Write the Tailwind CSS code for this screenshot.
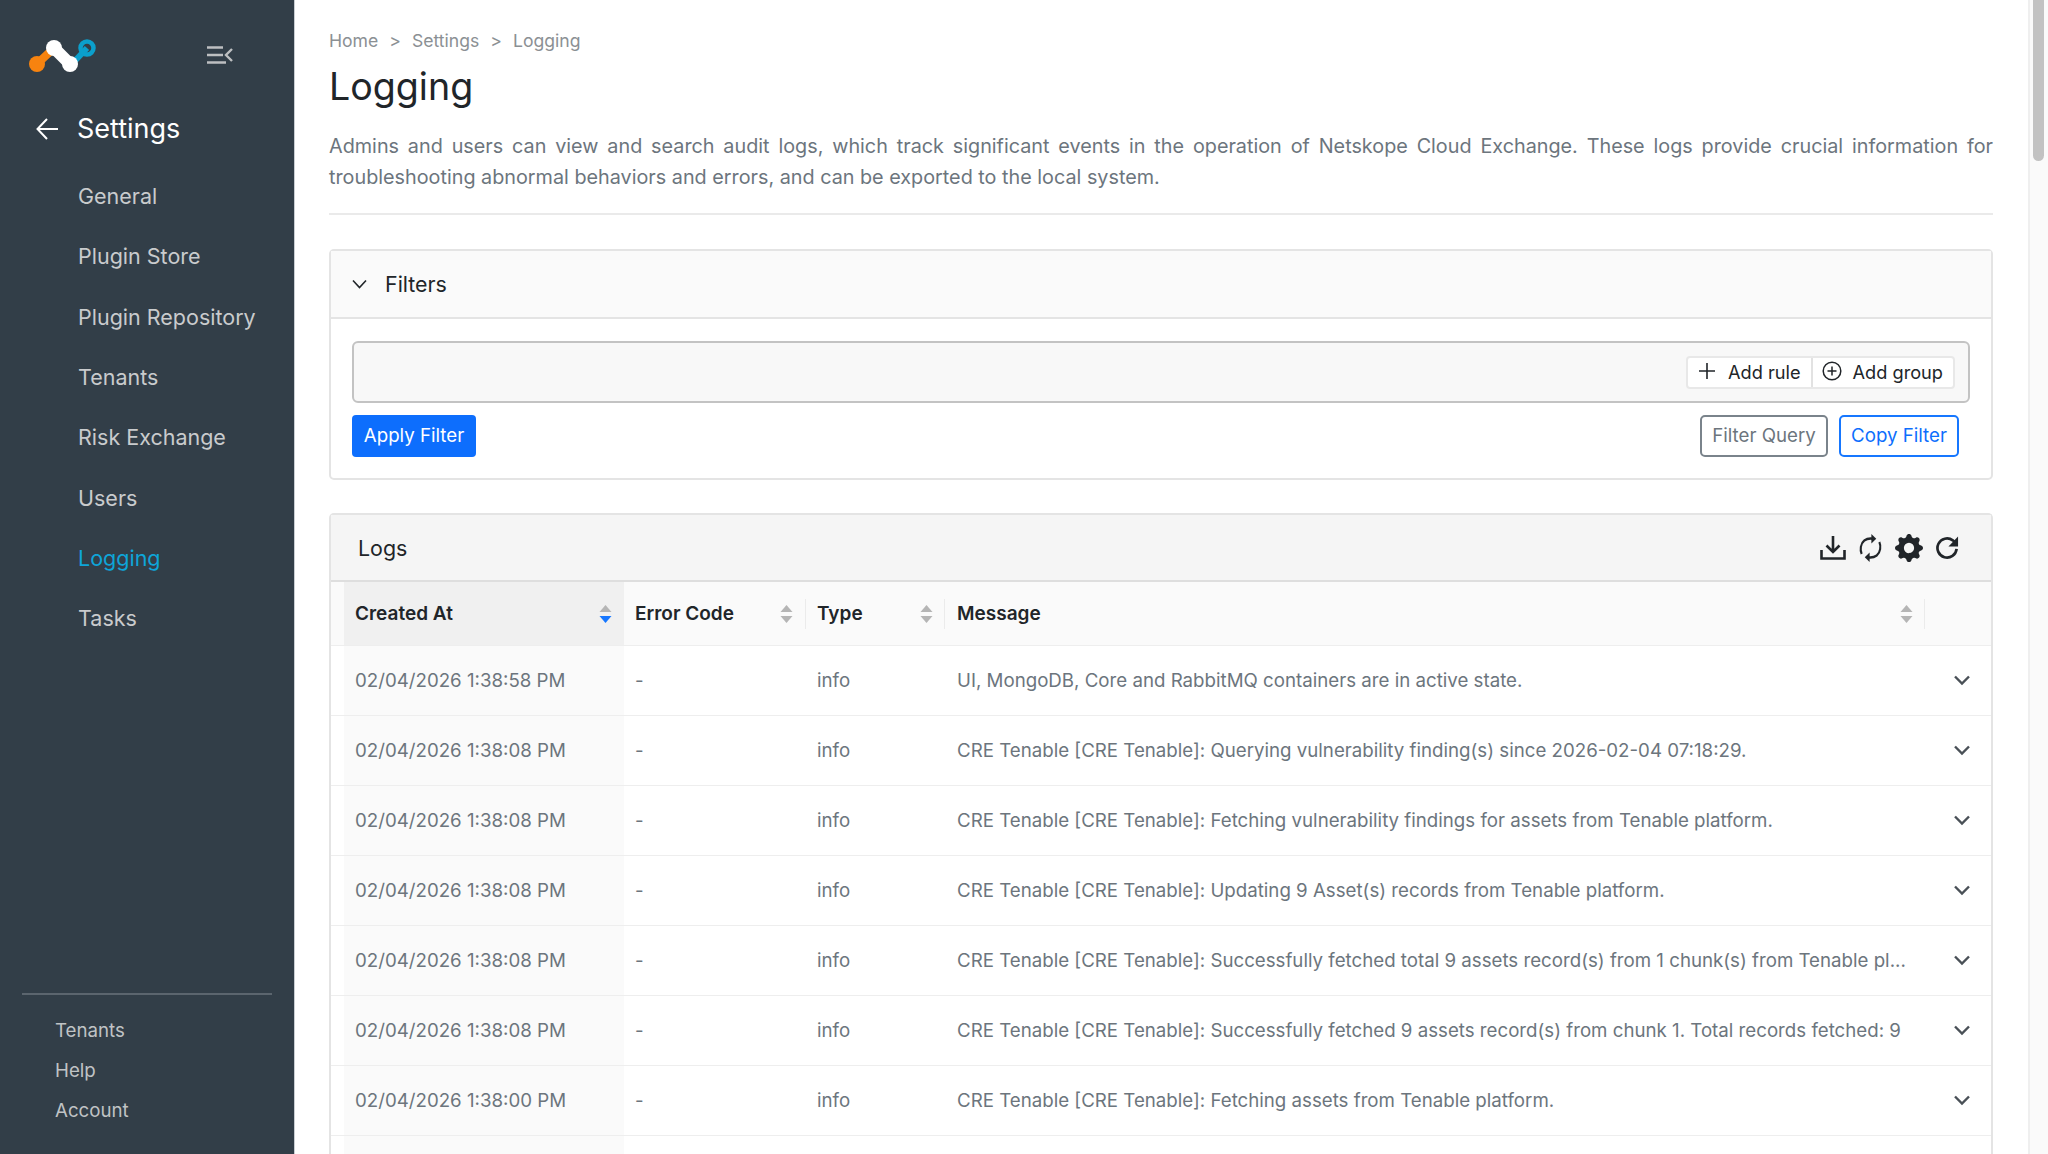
<!doctype html>
<html lang="en">
<head>
<meta charset="utf-8">
<title>Logging</title>
<script src="https://cdn.jsdelivr.net/npm/@tailwindcss/browser@4"></script>
</head>
<body class="font-['Inter',sans-serif] text-[#212529]">
<div class="flex h-[1154px] w-[2048px] overflow-hidden bg-white">
  <!-- Sidebar -->
  <aside class="flex w-[295px] shrink-0 flex-col border-r border-[#c9ced3] bg-[#323e48]">
    <div class="flex h-[111px] items-center pl-[27px] pt-[1px]">
      <svg width="72" height="44" viewBox="0 0 72 44" class="mb-[6px]">
        <path d="M10 33 L27 17" stroke="#f7830f" stroke-width="8" stroke-linecap="round"/>
        <circle cx="10" cy="33" r="8" fill="#f7830f"/>
        <path d="M45 33 L60 17" stroke="#0b9fcc" stroke-width="6"/>
        <circle cx="60" cy="17" r="6.5" fill="none" stroke="#0b9fcc" stroke-width="4.5"/>
        <path d="M27 17 L43 33" stroke="#fff" stroke-width="12" stroke-linecap="round"/>
        <circle cx="27" cy="17" r="8" fill="#fff"/>
        <circle cx="43" cy="33" r="8" fill="#fff"/>
      </svg>
      <svg width="26" height="18" viewBox="0 0 26 18" class="ml-[108px] mb-[3px]" fill="none" stroke="#bdbfc1" stroke-width="2.4">
        <path d="M0 1.500H16M0 9H16M0 16.500H19M25 3L19 9L25 15"/>
      </svg>
    </div>
    <div class="flex h-[36px] items-center pl-[36px]">
      <svg width="22" height="22" viewBox="0 0 22 22" fill="none" stroke="#fff" stroke-width="2" class="mb-[1px]"><path d="M22 11H1.500M11 1L1.500 11L11 21"/></svg>
      <span class="ml-[19px] text-[27px] leading-[36px] text-white">Settings</span>
    </div>
    <nav class="mt-[19px] flex flex-col pl-[78px] text-[21.5px] text-[#c9cbcd]">
      <a class="flex h-[60.3px] items-center">General</a>
      <a class="flex h-[60.3px] items-center">Plugin Store</a>
      <a class="flex h-[60.3px] items-center">Plugin Repository</a>
      <a class="flex h-[60.3px] items-center">Tenants</a>
      <a class="flex h-[60.3px] items-center">Risk Exchange</a>
      <a class="flex h-[60.3px] items-center">Users</a>
      <a class="flex h-[60.3px] items-center text-[#0ea5d8]">Logging</a>
      <a class="flex h-[60.3px] items-center">Tasks</a>
    </nav>
    <div class="mx-[22px] mt-auto border-t-2 border-[#5b656e]"></div>
    <div class="flex flex-col pb-[23px] pl-[55px] pt-[16px] text-[18.7px] text-[#c0c3c5]">
      <a class="flex h-[40px] items-center">Tenants</a>
      <a class="flex h-[40px] items-center">Help</a>
      <a class="flex h-[40px] items-center">Account</a>
    </div>
  </aside>

  <!-- Main -->
  <main class="flex min-w-0 flex-1 flex-col overflow-hidden pl-[34px] pr-[35px]">
    <div class="mt-[29px] flex h-[24px] items-center text-[17.6px] text-[#8b9094]">
      <span>Home</span><span class="mx-[11px]">&gt;</span><span>Settings</span><span class="mx-[11px]">&gt;</span><span>Logging</span>
    </div>
    <h1 class="mt-[9px] h-[50px] text-[37.6px] leading-[50px] font-normal text-[#212529]">Logging</h1>
    <p class="mt-[19px] text-justify text-[19.8px] leading-[31px] text-[#6c757d]">Admins and users can view and search audit logs, which track significant events in the operation of Netskope Cloud Exchange. These logs provide crucial information for troubleshooting abnormal behaviors and errors, and can be exported to the local system.</p>
    <div class="mt-[20px] border-t-2 border-[#eaeaea]"></div>

    <!-- Filters -->
    <section class="mt-[34px] h-[231px] shrink-0 rounded-[5px] border-2 border-[#e4e4e4]">
      <div class="flex h-[68px] items-center border-b-2 border-[#e4e4e4] bg-[#fafafa] pl-[21px]">
        <svg width="15" height="10" viewBox="0 0 15 10" fill="none" stroke="#212529" stroke-width="1.600"><path d="M1 1.500L7.500 8.500L14 1.500"/></svg>
        <span class="ml-[18px] pt-[1px] text-[21.4px] text-[#212529]">Filters</span>
      </div>
      <div class="pl-[21px] pr-[21px] pt-[22px]">
        <div class="flex h-[62px] items-center justify-end rounded-[6px] border-2 border-[#c3c3c3] bg-[#f8f8f8] pr-[13px]">
          <div class="flex h-[33px] items-center rounded-[4px] border-2 border-[#e8e8e8] bg-white text-[18.2px] text-[#212529]">
            <div class="flex h-full items-center gap-[13px] border-r-2 border-[#e2e2e2] pl-[11px] pr-[10px]">
              <svg width="16" height="16" viewBox="0 0 16 16" fill="none" stroke="#212529" stroke-width="1.600" class="mb-[3px]"><path d="M8 0V16M0 8H16"/></svg>
              <span class="pt-[2px]">Add rule</span>
            </div>
            <div class="flex h-full items-center gap-[11px] pl-[9px] pr-[10px]">
              <svg width="20" height="20" viewBox="0 0 20 20" fill="none" stroke="#212529" stroke-width="1.500" class="mb-[3px]"><circle cx="10" cy="10" r="8.800"/><path d="M10 5.500V14.500M5.500 10H14.500"/></svg>
              <span class="pt-[2px]">Add group</span>
            </div>
          </div>
        </div>
        <div class="mt-[12px] flex items-center justify-between pr-[11px]">
          <button class="h-[42px] w-[124px] rounded-[4px] bg-[#0d6efd] pt-[1px] text-[18.7px] text-white">Apply Filter</button>
          <div class="flex gap-[11px]">
            <button class="h-[42px] w-[128px] rounded-[5px] border-2 border-[#7a838b] bg-white pt-[1px] text-[18.7px] text-[#6c757d]">Filter Query</button>
            <button class="h-[42px] w-[120px] rounded-[5px] border-2 border-[#1677ff] bg-white pt-[1px] text-[18.7px] text-[#0d6efd]">Copy Filter</button>
          </div>
        </div>
      </div>
    </section>

    <!-- Logs -->
    <section class="mt-[33px] flex-1 rounded-t-[5px] border-2 border-b-0 border-[#e4e4e4]">
      <div class="flex h-[67px] items-center justify-between border-b-2 border-[#dedede] bg-[#f5f5f5] pl-[27px] pr-[32px]">
        <span class="pt-[1px] text-[21.4px] text-[#212529]">Logs</span>
        <div class="flex items-center gap-[13px]">
          <svg width="26" height="26" viewBox="0 0 26 26" fill="none" stroke="#212529" stroke-width="2.600"><path d="M1.500 15V23.500H24.500V15M13 1V17M6.500 10.500L13 17L19.500 10.500"/></svg>
          <svg width="23" height="30" viewBox="0 0 26 30" preserveAspectRatio="none" fill="none" stroke="#212529" stroke-width="2.400"><path d="M3 21C1 17 1.600 10.500 6 7.500C9 5.500 12.500 5.200 16 5.700M23 9C25 13 24.400 19.500 20 22.500C17 24.500 13.500 24.800 10 24.300"/><path d="M14 1L19.500 5.700L14 10.500Z" fill="#212529" stroke="none"/><path d="M12 19.500L6.500 24.300L12 29Z" fill="#212529" stroke="none"/></svg>
          <svg width="28" height="28" viewBox="0 0 16 16" fill="#212529"><path d="M9.405 1.050c-.413-1.400-2.397-1.400-2.810 0l-.1.340a1.464 1.464 0 0 1-2.105.872l-.310-.170c-1.283-.698-2.686.705-1.987 1.987l.169.311c.446.820.023 1.841-.872 2.105l-.340.100c-1.400.413-1.400 2.397 0 2.810l.340.100a1.464 1.464 0 0 1 .872 2.105l-.170.310c-.698 1.283.705 2.686 1.987 1.987l.311-.169a1.464 1.464 0 0 1 2.105.872l.100.340c.413 1.400 2.397 1.400 2.810 0l.100-.340a1.464 1.464 0 0 1 2.105-.872l.310.170c1.283.698 2.686-.705 1.987-1.987l-.169-.311a1.464 1.464 0 0 1 .872-2.105l.340-.100c1.400-.413 1.400-2.397 0-2.810l-.340-.100a1.464 1.464 0 0 1-.872-2.105l.170-.310c.698-1.283-.705-2.686-1.987-1.987l-.311.169a1.464 1.464 0 0 1-2.105-.872l-.100-.340zM8 10.930a2.929 2.929 0 1 1 0-5.860 2.929 2.929 0 0 1 0 5.858z"/></svg>
          <svg width="23" height="23" viewBox="0 0 24 24" fill="none" stroke="#212529" stroke-width="2.800"><path d="M21.500 13.500A10 10 0 1 1 17.500 4.500L21 7.500"/><path d="M23 0.500V11H13Z" fill="#212529" stroke="none"/></svg>
        </div>
      </div>

      <div class="grid grid-cols-[13px_280px_182px_139px_980px_1fr] text-[18.7px] text-[#6c757d]">
        <!-- Header -->
        <div class="h-[64px] border-b border-[#eeeeee] bg-[#fafafa]"></div>
        <div class="flex h-[64px] items-center justify-between border-b border-[#eeeeee] bg-[#f0f0f0] pl-[11px] pr-[12px] text-[19px] font-semibold text-[#212529]"><span class="pt-[2px]">Created At</span>
          <svg width="13" height="20" viewBox="0 0 13 20"><path d="M6.500 1L12.500 8H.5Z" fill="#b5b5b5"/><path d="M6.500 19L12.500 12H.5Z" fill="#1677ff"/></svg>
        </div>
        <div class="relative flex h-[64px] items-center justify-between border-b border-[#eeeeee] bg-[#fafafa] pl-[11px] pr-[13px] text-[19px] font-semibold text-[#212529] after:absolute after:right-0 after:top-[17px] after:h-[30px] after:w-px after:bg-[#ebebeb] after:content-['']"><span class="pt-[2px]">Error Code</span>
          <svg width="13" height="20" viewBox="0 0 13 20"><path d="M6.500 1L12.500 8H.5Z" fill="#b5b5b5"/><path d="M6.500 19L12.500 12H.5Z" fill="#b5b5b5"/></svg>
        </div>
        <div class="relative flex h-[64px] items-center justify-between border-b border-[#eeeeee] bg-[#fafafa] pl-[11px] pr-[12px] text-[19px] font-semibold text-[#212529] after:absolute after:right-0 after:top-[17px] after:h-[30px] after:w-px after:bg-[#ebebeb] after:content-['']"><span class="pt-[2px]">Type</span>
          <svg width="13" height="20" viewBox="0 0 13 20"><path d="M6.500 1L12.500 8H.5Z" fill="#b5b5b5"/><path d="M6.500 19L12.500 12H.5Z" fill="#b5b5b5"/></svg>
        </div>
        <div class="relative flex h-[64px] items-center justify-between border-b border-[#eeeeee] bg-[#fafafa] pl-[12px] pr-[12px] text-[19px] font-semibold text-[#212529] after:absolute after:right-0 after:top-[17px] after:h-[30px] after:w-px after:bg-[#ebebeb] after:content-['']"><span class="pt-[2px]">Message</span>
          <svg width="13" height="20" viewBox="0 0 13 20"><path d="M6.500 1L12.500 8H.5Z" fill="#b5b5b5"/><path d="M6.500 19L12.500 12H.5Z" fill="#b5b5b5"/></svg>
        </div>
        <div class="h-[64px] border-b border-[#eeeeee] bg-[#fafafa]"></div>

        <!-- Row 1 -->
        <div class="h-[70px] border-b border-[#eeeeee]"></div>
        <div class="flex h-[70px] items-center border-b border-[#eeeeee] bg-[#fafafa] pl-[11px] pt-[2px]">02/04/2026 1:38:58 PM</div>
        <div class="flex h-[70px] items-center border-b border-[#eeeeee] pl-[11px] pt-[2px]">-</div>
        <div class="flex h-[70px] items-center border-b border-[#eeeeee] pl-[11px] pt-[2px]">info</div>
        <div class="flex h-[70px] items-center overflow-hidden whitespace-nowrap border-b border-[#eeeeee] pl-[12px] pt-[2px]">UI, MongoDB, Core and RabbitMQ containers are in active state.</div>
        <div class="flex h-[70px] items-center justify-end border-b border-[#eeeeee] pr-[21px]"><svg width="16" height="11" viewBox="0 0 16 11" fill="none" stroke="#495057" stroke-width="2.400"><path d="M1 1.500L8 8.500L15 1.500"/></svg></div>

        <!-- Row 2 -->
        <div class="h-[70px] border-b border-[#eeeeee]"></div>
        <div class="flex h-[70px] items-center border-b border-[#eeeeee] bg-[#fafafa] pl-[11px] pt-[2px]">02/04/2026 1:38:08 PM</div>
        <div class="flex h-[70px] items-center border-b border-[#eeeeee] pl-[11px] pt-[2px]">-</div>
        <div class="flex h-[70px] items-center border-b border-[#eeeeee] pl-[11px] pt-[2px]">info</div>
        <div class="flex h-[70px] items-center overflow-hidden whitespace-nowrap border-b border-[#eeeeee] pl-[12px] pt-[2px]">CRE Tenable [CRE Tenable]: Querying vulnerability finding(s) since 2026-02-04 07:18:29.</div>
        <div class="flex h-[70px] items-center justify-end border-b border-[#eeeeee] pr-[21px]"><svg width="16" height="11" viewBox="0 0 16 11" fill="none" stroke="#495057" stroke-width="2.400"><path d="M1 1.500L8 8.500L15 1.500"/></svg></div>

        <!-- Row 3 -->
        <div class="h-[70px] border-b border-[#eeeeee]"></div>
        <div class="flex h-[70px] items-center border-b border-[#eeeeee] bg-[#fafafa] pl-[11px] pt-[2px]">02/04/2026 1:38:08 PM</div>
        <div class="flex h-[70px] items-center border-b border-[#eeeeee] pl-[11px] pt-[2px]">-</div>
        <div class="flex h-[70px] items-center border-b border-[#eeeeee] pl-[11px] pt-[2px]">info</div>
        <div class="flex h-[70px] items-center overflow-hidden whitespace-nowrap border-b border-[#eeeeee] pl-[12px] pt-[2px]">CRE Tenable [CRE Tenable]: Fetching vulnerability findings for assets from Tenable platform.</div>
        <div class="flex h-[70px] items-center justify-end border-b border-[#eeeeee] pr-[21px]"><svg width="16" height="11" viewBox="0 0 16 11" fill="none" stroke="#495057" stroke-width="2.400"><path d="M1 1.500L8 8.500L15 1.500"/></svg></div>

        <!-- Row 4 -->
        <div class="h-[70px] border-b border-[#eeeeee]"></div>
        <div class="flex h-[70px] items-center border-b border-[#eeeeee] bg-[#fafafa] pl-[11px] pt-[2px]">02/04/2026 1:38:08 PM</div>
        <div class="flex h-[70px] items-center border-b border-[#eeeeee] pl-[11px] pt-[2px]">-</div>
        <div class="flex h-[70px] items-center border-b border-[#eeeeee] pl-[11px] pt-[2px]">info</div>
        <div class="flex h-[70px] items-center overflow-hidden whitespace-nowrap border-b border-[#eeeeee] pl-[12px] pt-[2px]">CRE Tenable [CRE Tenable]: Updating 9 Asset(s) records from Tenable platform.</div>
        <div class="flex h-[70px] items-center justify-end border-b border-[#eeeeee] pr-[21px]"><svg width="16" height="11" viewBox="0 0 16 11" fill="none" stroke="#495057" stroke-width="2.400"><path d="M1 1.500L8 8.500L15 1.500"/></svg></div>

        <!-- Row 5 -->
        <div class="h-[70px] border-b border-[#eeeeee]"></div>
        <div class="flex h-[70px] items-center border-b border-[#eeeeee] bg-[#fafafa] pl-[11px] pt-[2px]">02/04/2026 1:38:08 PM</div>
        <div class="flex h-[70px] items-center border-b border-[#eeeeee] pl-[11px] pt-[2px]">-</div>
        <div class="flex h-[70px] items-center border-b border-[#eeeeee] pl-[11px] pt-[2px]">info</div>
        <div class="flex h-[70px] items-center overflow-hidden whitespace-nowrap border-b border-[#eeeeee] pl-[12px] pt-[2px]">CRE Tenable [CRE Tenable]: Successfully fetched total 9 assets record(s) from 1 chunk(s) from Tenable pl...</div>
        <div class="flex h-[70px] items-center justify-end border-b border-[#eeeeee] pr-[21px]"><svg width="16" height="11" viewBox="0 0 16 11" fill="none" stroke="#495057" stroke-width="2.400"><path d="M1 1.500L8 8.500L15 1.500"/></svg></div>

        <!-- Row 6 -->
        <div class="h-[70px] border-b border-[#eeeeee]"></div>
        <div class="flex h-[70px] items-center border-b border-[#eeeeee] bg-[#fafafa] pl-[11px] pt-[2px]">02/04/2026 1:38:08 PM</div>
        <div class="flex h-[70px] items-center border-b border-[#eeeeee] pl-[11px] pt-[2px]">-</div>
        <div class="flex h-[70px] items-center border-b border-[#eeeeee] pl-[11px] pt-[2px]">info</div>
        <div class="flex h-[70px] items-center overflow-hidden whitespace-nowrap border-b border-[#eeeeee] pl-[12px] pt-[2px]">CRE Tenable [CRE Tenable]: Successfully fetched 9 assets record(s) from chunk 1. Total records fetched: 9</div>
        <div class="flex h-[70px] items-center justify-end border-b border-[#eeeeee] pr-[21px]"><svg width="16" height="11" viewBox="0 0 16 11" fill="none" stroke="#495057" stroke-width="2.400"><path d="M1 1.500L8 8.500L15 1.500"/></svg></div>

        <!-- Row 7 -->
        <div class="h-[70px] border-b border-[#eeeeee]"></div>
        <div class="flex h-[70px] items-center border-b border-[#eeeeee] bg-[#fafafa] pl-[11px] pt-[2px]">02/04/2026 1:38:00 PM</div>
        <div class="flex h-[70px] items-center border-b border-[#eeeeee] pl-[11px] pt-[2px]">-</div>
        <div class="flex h-[70px] items-center border-b border-[#eeeeee] pl-[11px] pt-[2px]">info</div>
        <div class="flex h-[70px] items-center overflow-hidden whitespace-nowrap border-b border-[#eeeeee] pl-[12px] pt-[2px]">CRE Tenable [CRE Tenable]: Fetching assets from Tenable platform.</div>
        <div class="flex h-[70px] items-center justify-end border-b border-[#eeeeee] pr-[21px]"><svg width="16" height="11" viewBox="0 0 16 11" fill="none" stroke="#495057" stroke-width="2.400"><path d="M1 1.500L8 8.500L15 1.500"/></svg></div>

        <!-- Partial row -->
        <div class="h-[70px]"></div>
        <div class="h-[70px] bg-[#fafafa]"></div>
      </div>
    </section>
  </main>

  <!-- Scrollbar -->
  <div class="w-[20px] shrink-0 border-l-2 border-[#efefef] bg-[#fafafa] pl-[3px]">
    <div class="h-[161px] w-[11px] rounded-b-full bg-[#c2c2c2]"></div>
  </div>
</div>
</body>
</html>
